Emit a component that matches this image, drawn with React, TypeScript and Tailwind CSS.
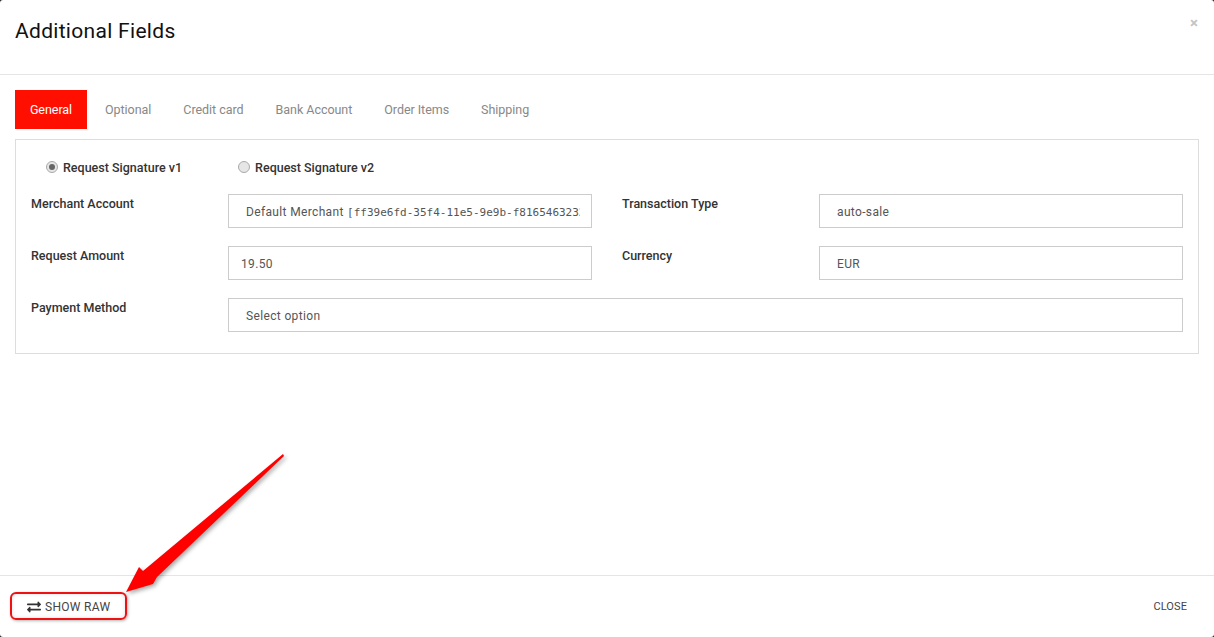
import { FaExchangeAlt } from "react-icons/fa";

const tabs = ["Optional", "Credit card", "Bank Account", "Order Items", "Shipping"];

const labelClass = "w-[197px] shrink-0 pt-[1px] text-[12.5px] font-medium leading-[18px] text-[#333]";
const inputClass = "h-[34px] overflow-hidden whitespace-nowrap border border-[#ccc] bg-white text-[12px] leading-[34px] tracking-[0.35px] text-[#555]";

function Radio({ checked, label }: { checked?: boolean; label: string }) {
  return (
    <div className="flex items-center gap-[5px]">
      <span className="-mt-[3px] flex size-[12px] items-center justify-center rounded-full border border-[#aaa] bg-[#e6e6e6]">
        {checked && <span className="size-[6px] rounded-full bg-[#666]" />}
      </span>
      <span className="text-[12.5px] font-medium leading-[18px] text-[#333]">{label}</span>
    </div>
  );
}

export default function App() {
  return (
    <div className="h-[637px] w-[1214px] overflow-hidden bg-[#222] font-['Roboto',sans-serif]">
      <div className="relative flex h-full flex-col overflow-hidden rounded-[3px] bg-white">
        {/* Header */}
        <div className="relative flex h-[75px] shrink-0 border-b border-[#e5e5e5] pl-[15px] pt-[16px]">
          <h4 className="text-[21px] leading-[30px] tracking-[0.3px] text-[#111]">Additional Fields</h4>
          <span className="absolute right-[16px] top-[13px] text-[15px] font-bold leading-[20px] text-[#c4c4c4]">×</span>
        </div>

        {/* Body */}
        <div className="flex-1 px-[15px] pt-[15px]">
          <div className="flex h-[39px] items-center pt-[1px] text-[12.5px] tracking-[-0.04px]">
            <span className="-mt-[1px] flex h-[39px] w-[72px] items-center justify-center bg-[#ff0f00] pt-[1px] text-white">General</span>
            <div className="ml-[18px] flex gap-[32px] text-[#888]">
              {tabs.map((t) => (
                <span key={t}>{t}</span>
              ))}
            </div>
          </div>

          <div className="mt-[10px] h-[215px] border border-[#ddd] px-[15px] pt-[18px]">
            <div className="flex h-[20px] gap-[56px] pl-[15px]">
              <Radio checked label="Request Signature v1" />
              <Radio label="Request Signature v2" />
            </div>
            <div className="mt-[16px] flex flex-col gap-[18px]">
              <div className="flex gap-[30px]">
                <div className="flex">
                  <label className={labelClass}>Merchant Account</label>
                  <div className={`${inputClass} w-[364px] pl-[17px] pr-[11px]`}>
                    <div className="overflow-hidden">
                      Default Merchant{" "}
                      <span className="font-['DejaVu_Sans_Mono',monospace] text-[11px] tracking-normal">
                        [ff39e6fd-35f4-11e5-9e9b-f81654632327]
                      </span>
                    </div>
                  </div>
                </div>
                <div className="flex">
                  <label className={labelClass}>Transaction Type</label>
                  <div className={`${inputClass} w-[364px] pl-[17px]`}>auto-sale</div>
                </div>
              </div>
              <div className="flex gap-[30px]">
                <div className="flex">
                  <label className={labelClass}>Request Amount</label>
                  <div className={`${inputClass} w-[364px] pl-[12px]`}>19.50</div>
                </div>
                <div className="flex">
                  <label className={labelClass}>Currency</label>
                  <div className={`${inputClass} w-[364px] pl-[17px]`}>EUR</div>
                </div>
              </div>
              <div className="flex">
                <label className={labelClass}>Payment Method</label>
                <div className={`${inputClass} w-[955px] pl-[17px]`}>Select option</div>
              </div>
            </div>
          </div>
        </div>

        {/* Footer */}
        <div className="flex h-[62px] shrink-0 items-center justify-between border-t border-[#e5e5e5] px-[27px] text-[12px] text-[#444]">
          <span className="flex items-center gap-[4px] tracking-[0.3px]">
            <FaExchangeAlt size={14} className="text-[#333]" />
            SHOW RAW
          </span>
          <span className="pt-[2px] text-[11px] tracking-[0.1px]">CLOSE</span>
        </div>

        {/* Annotation over the screenshot */}
        <div className="absolute left-[10px] top-[592px] h-[28px] w-[117px] rounded-[6px] border-2 border-[#ee1111] shadow-[1px_1px_3px_rgba(0,0,0,0.3),inset_0_0_4px_rgba(0,0,0,0.12)]" />
        <svg className="absolute left-0 top-0 drop-shadow-[2px_2px_2px_rgba(0,0,0,0.35)]" width="300" height="637" viewBox="0 0 300 637">
          <polygon points="126,592 139,567 143,571 283,454 284,456 157,577 153,584" fill="#f00" />
        </svg>
      </div>
    </div>
  );
}
